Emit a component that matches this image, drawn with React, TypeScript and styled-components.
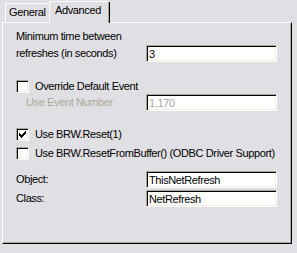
import React from 'react';
import styled, { createGlobalStyle } from 'styled-components';

const Global = createGlobalStyle`
  html, body { margin: 0; padding: 0; background: #e0dfe3; }
  body {
    font-family: "Liberation Sans", Arial, sans-serif;
    font-size: 11px;
    letter-spacing: -0.38px;
    color: #000;
    width: 297px;
    height: 253px;
    overflow: hidden;
  }
`;

const Dialog = styled.div`
  width: 297px;
  height: 253px;
  box-sizing: border-box;
  padding: 1px 0 0 2px;
  background: #e0dfe3;
`;

const TabStrip = styled.div`
  display: flex;
  align-items: flex-end;
  height: 21px;
  padding-left: 3px;
  position: relative;
  z-index: 1;
`;

const Tab = styled.div<{ $active?: boolean; $w: number }>`
  width: ${p => p.$w}px;
  height: ${p => (p.$active ? 22 : 19)}px;
  margin-bottom: ${p => (p.$active ? -1 : 0)}px;
  box-sizing: border-box;
  padding: 2px 0 0 ${p => (p.$active ? 5 : 3)}px;
  line-height: 13px;
  background: #e0dfe3;
  border-top: 1px solid #fff;
  border-left: 1px solid #fff;
  border-right: ${p => (p.$active ? '1px solid #000' : 'none')};
  border-top-left-radius: 2px;
  border-top-right-radius: 2px;
  box-shadow: ${p => (p.$active ? 'inset -1px 0 0 #aca899' : 'none')};
  white-space: nowrap;
`;

const Panel = styled.div`
  width: 290px;
  height: 222px;
  box-sizing: border-box;
  border-top: 1px solid #fff;
  border-left: 1px solid #fff;
  border-right: 1px solid #000;
  border-bottom: 1px solid #000;
  box-shadow: inset -1px -1px 0 #aca899;
  padding: 7px 0 0 13px;
  display: flex;
  flex-direction: column;
`;

const Caption = styled.div<{ $mt?: number }>`
  line-height: 13px;
  margin-top: ${p => p.$mt ?? 0}px;
  white-space: nowrap;
`;

const FieldRow = styled.div<{ $mt?: number }>`
  display: flex;
  align-items: center;
  height: 17px;
  margin-top: ${p => p.$mt ?? 0}px;
`;

const Label = styled.span<{ $indent?: number; $disabled?: boolean }>`
  width: ${p => 130 - (p.$indent ?? 0)}px;
  padding-left: ${p => p.$indent ?? 0}px;
  line-height: 13px;
  white-space: nowrap;
  color: ${p => (p.$disabled ? '#aca899' : '#000')};
`;

const Field = styled.input`
  width: 131px;
  height: 17px;
  box-sizing: border-box;
  margin: 0;
  padding: 0 0 0 2px;
  font: inherit;
  letter-spacing: inherit;
  line-height: 13px;
  color: #000;
  background: #fff;
  border-top: 1px solid #aca899;
  border-left: 1px solid #aca899;
  border-right: 1px solid #fff;
  border-bottom: 1px solid #fff;
  box-shadow: inset 1px 1px 0 #000, inset -1px -1px 0 #f1efe2;
  outline: none;
  &:disabled {
    color: #aca899;
    -webkit-text-fill-color: #aca899;
    opacity: 1;
  }
`;

const CheckRow = styled.div<{ $mt?: number }>`
  display: flex;
  align-items: center;
  gap: 6px;
  height: 13px;
  margin-top: ${p => p.$mt ?? 0}px;
  white-space: nowrap;
  line-height: 13px;
`;

const Box = styled.span`
  width: 13px;
  height: 13px;
  flex: none;
  box-sizing: border-box;
  background: #fff;
  border-top: 1px solid #aca899;
  border-left: 1px solid #aca899;
  border-right: 1px solid #fff;
  border-bottom: 1px solid #fff;
  box-shadow: inset 1px 1px 0 #000, inset -1px -1px 0 #f1efe2;
  display: flex;
  align-items: center;
  justify-content: center;
`;

const CheckMark = () => (
  <svg width="7" height="7" viewBox="0 0 7 7" shapeRendering="crispEdges">
    <path
      fill="#000"
      d="M6 0h1v3h-1zM5 1h1v3h-1zM4 2h1v3h-1zM3 3h1v3h-1zM2 4h1v3h-1zM1 3h1v3h-1zM0 2h1v3h-1z"
    />
  </svg>
);

const Check = ({ checked, mt, children }: { checked?: boolean; mt?: number; children: React.ReactNode }) => (
  <CheckRow $mt={mt}>
    <Box>{checked && <CheckMark />}</Box>
    <span>{children}</span>
  </CheckRow>
);

export default function App() {
  return (
    <>
      <Global />
      <Dialog>
        <TabStrip>
          <Tab $w={44}>General</Tab>
          <Tab $active $w={61}>Advanced</Tab>
        </TabStrip>
        <Panel>
          <Caption>Minimum time between</Caption>
          <FieldRow $mt={2}>
            <Label>refreshes (in seconds)</Label>
            <Field readOnly defaultValue="3" />
          </FieldRow>
          <Check mt={18}>Override Default Event</Check>
          <FieldRow $mt={1}>
            <Label $indent={10} $disabled>Use Event Number</Label>
            <Field disabled defaultValue="1,170" />
          </FieldRow>
          <Check checked mt={17}>Use BRW.Reset(1)</Check>
          <Check mt={6}>Use BRW.ResetFromBuffer() (ODBC Driver Support)</Check>
          <FieldRow $mt={11}>
            <Label>Object:</Label>
            <Field readOnly defaultValue="ThisNetRefresh" />
          </FieldRow>
          <FieldRow $mt={2}>
            <Label>Class:</Label>
            <Field readOnly defaultValue="NetRefresh" />
          </FieldRow>
        </Panel>
      </Dialog>
    </>
  );
}
